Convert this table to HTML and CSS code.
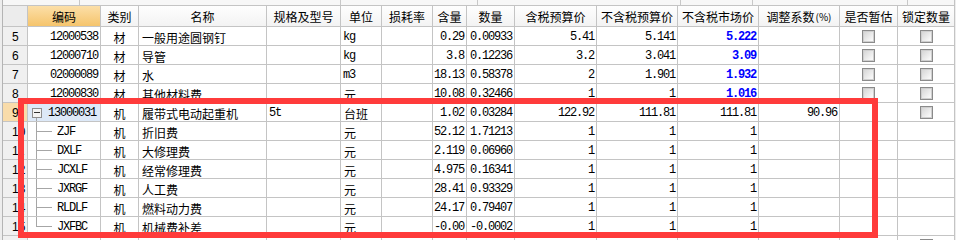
FILE: index.html
```html
<!DOCTYPE html>
<html>
<head>
<meta charset="utf-8">
<link rel="stylesheet" href="styles.css">
</head>
<body>
<div class="wrap">
  <div class="strip">
    <div class="s"></div><div class="s"></div><div class="s"></div><div class="s"></div><div class="s"></div><div class="s"></div><div class="s last"></div>
  </div>
  <div class="row head">
    <div class="c h rnh"></div>
    <div class="c h sel">编码</div>
    <div class="c h">类别</div>
    <div class="c h">名称</div>
    <div class="c h">规格及型号</div>
    <div class="c h">单位</div>
    <div class="c h">损耗率</div>
    <div class="c h">含量</div>
    <div class="c h">数量</div>
    <div class="c h">含税预算价</div>
    <div class="c h">不含税预算价</div>
    <div class="c h">不含税市场价</div>
    <div class="c h">调整系数<span class="pct">(%)</span></div>
    <div class="c h">是否暂估</div>
    <div class="c h">锁定数量</div>
  </div>

  <div class="row">
    <div class="c rn">5</div><div class="c n r">12000538</div><div class="c z ctr">材</div><div class="c z">一般用途圆钢钉</div><div class="c n"></div><div class="c n">kg</div><div class="c"></div><div class="c n r">0.29</div><div class="c n r">0.00933</div><div class="c n r">5.41</div><div class="c n r">5.141</div><div class="c n r blue">5.222</div><div class="c"></div><div class="c ctr"><span class="cb"></span></div><div class="c ctr"><span class="cb"></span></div>
  </div>
  <div class="row">
    <div class="c rn">6</div><div class="c n r">12000710</div><div class="c z ctr">材</div><div class="c z">导管</div><div class="c n"></div><div class="c n">kg</div><div class="c"></div><div class="c n r">3.8</div><div class="c n r">0.12236</div><div class="c n r">3.2</div><div class="c n r">3.041</div><div class="c n r blue">3.09</div><div class="c"></div><div class="c ctr"><span class="cb"></span></div><div class="c ctr"><span class="cb"></span></div>
  </div>
  <div class="row">
    <div class="c rn">7</div><div class="c n r">02000089</div><div class="c z ctr">材</div><div class="c z">水</div><div class="c n"></div><div class="c n">m3</div><div class="c"></div><div class="c n r">18.13</div><div class="c n r">0.58378</div><div class="c n r">2</div><div class="c n r">1.901</div><div class="c n r blue">1.932</div><div class="c"></div><div class="c ctr"><span class="cb"></span></div><div class="c ctr"><span class="cb"></span></div>
  </div>
  <div class="row">
    <div class="c rn">8</div><div class="c n r">12000830</div><div class="c z ctr">材</div><div class="c z">其他材料费</div><div class="c n"></div><div class="c z">元</div><div class="c"></div><div class="c n r">10.08</div><div class="c n r">0.32466</div><div class="c n r">1</div><div class="c n r">1</div><div class="c n r blue">1.016</div><div class="c"></div><div class="c ctr"><span class="cb"></span></div><div class="c ctr"><span class="cb"></span></div>
  </div>
  <div class="row">
    <div class="c rn rnsel">9</div><div class="c n parent cursel"><span class="tbox minus"></span>13000031</div><div class="c z ctr">机</div><div class="c z">履带式电动起重机</div><div class="c n">5t</div><div class="c z">台班</div><div class="c"></div><div class="c n r">1.02</div><div class="c n r">0.03284</div><div class="c n r">122.92</div><div class="c n r">111.81</div><div class="c n r">111.81</div><div class="c n r">90.96</div><div class="c"></div><div class="c ctr"><span class="cb"></span></div>
  </div>
  <div class="row">
    <div class="c rn">10</div><div class="c n child">ZJF</div><div class="c z ctr">机</div><div class="c z">折旧费</div><div class="c n"></div><div class="c z">元</div><div class="c"></div><div class="c n r">52.12</div><div class="c n r">1.71213</div><div class="c n r">1</div><div class="c n r">1</div><div class="c n r">1</div><div class="c"></div><div class="c"></div><div class="c"></div>
  </div>
  <div class="row">
    <div class="c rn">11</div><div class="c n child">DXLF</div><div class="c z ctr">机</div><div class="c z">大修理费</div><div class="c n"></div><div class="c z">元</div><div class="c"></div><div class="c n r">2.119</div><div class="c n r">0.06960</div><div class="c n r">1</div><div class="c n r">1</div><div class="c n r">1</div><div class="c"></div><div class="c"></div><div class="c"></div>
  </div>
  <div class="row">
    <div class="c rn">12</div><div class="c n child">JCXLF</div><div class="c z ctr">机</div><div class="c z">经常修理费</div><div class="c n"></div><div class="c z">元</div><div class="c"></div><div class="c n r">4.975</div><div class="c n r">0.16341</div><div class="c n r">1</div><div class="c n r">1</div><div class="c n r">1</div><div class="c"></div><div class="c"></div><div class="c"></div>
  </div>
  <div class="row">
    <div class="c rn">13</div><div class="c n child">JXRGF</div><div class="c z ctr">机</div><div class="c z">人工费</div><div class="c n"></div><div class="c z">元</div><div class="c"></div><div class="c n r">28.41</div><div class="c n r">0.93329</div><div class="c n r">1</div><div class="c n r">1</div><div class="c n r">1</div><div class="c"></div><div class="c"></div><div class="c"></div>
  </div>
  <div class="row">
    <div class="c rn">14</div><div class="c n child">RLDLF</div><div class="c z ctr">机</div><div class="c z">燃料动力费</div><div class="c n"></div><div class="c z">元</div><div class="c"></div><div class="c n r">24.17</div><div class="c n r">0.79407</div><div class="c n r">1</div><div class="c n r">1</div><div class="c n r">1</div><div class="c"></div><div class="c"></div><div class="c"></div>
  </div>
  <div class="row">
    <div class="c rn">15</div><div class="c n child lastchild">JXFBC</div><div class="c z ctr">机</div><div class="c z">机械费补差</div><div class="c n"></div><div class="c z">元</div><div class="c"></div><div class="c n r">-0.00</div><div class="c n r">-0.0002</div><div class="c n r">1</div><div class="c n r">1</div><div class="c n r">1</div><div class="c"></div><div class="c"></div><div class="c"></div>
  </div>
  <div class="row">
    <div class="c rn">16</div><div class="c n parent"><span class="tbox plus"></span>13000058</div><div class="c z ctr">机</div><div class="c z">汽车式起重机械台班费</div><div class="c n"></div><div class="c z">台班</div><div class="c"></div><div class="c n r">0.35</div><div class="c n r">0.01127</div><div class="c n r">98.50</div><div class="c n r">90.12</div><div class="c n r">90.12</div><div class="c"></div><div class="c"></div><div class="c ctr"><span class="cb"></span></div>
  </div>
</div>
<div class="redbox"></div>
</body>
</html>
```
FILE: styles.css
```css
html, body {
  margin: 0;
  padding: 0;
}
body {
  width: 956px;
  height: 240px;
  overflow: hidden;
  position: relative;
  background: #ededed;
}
.wrap {
  margin-left: 2px;
  width: 951px;
  border-left: 1px solid #b4b4b4;
  border-right: 1px solid #c4c4c4;
  background: #ffffff;
  height: 240px;
  overflow: hidden;
}
.strip {
  height: 5px;
  border-bottom: 1px solid #c4c4c4;
  background: #f7f7f7;
  display: grid;
  grid-template-columns: 77px 261px 137px 203px 72px 155px 1fr;
}
.s {
  border-right: 1px solid #c8c8c8;
}
.s.last {
  border-right: none;
}
.row {
  display: grid;
  grid-template-columns: 25px 73px 38px 128px 74px 41px 51px 34px 48px 82px 81px 81px 81px 58px 56px;
  height: 19px;
}
.row.head {
  height: 21px;
}
.c {
  box-sizing: border-box;
  border-right: 1px solid #c4c4c4;
  border-bottom: 1px solid #c4c4c4;
  overflow: hidden;
  white-space: nowrap;
  display: flex;
  align-items: center;
  min-width: 0;
  color: #000;
}
.row .c:last-child {
  border-right: none;
}
.h {
  justify-content: center;
  font-family: "Noto Sans CJK SC", sans-serif;
  font-size: 12px;
  background: linear-gradient(#fefefe, #f3f3f3);
  padding-top: 1px;
}
.h.rnh {
  background: #ececec;
}
.h.sel {
  background: linear-gradient(#fcdfa8, #f5c46c);
}
.pct {
  font-size: 10px;
  margin-left: 1px;
}
.rn {
  background: #f0f0f0;
  font-family: "Liberation Sans", sans-serif;
  font-size: 12px;
  padding-left: 9px;
  padding-top: 1px;
}
.rn.rnsel {
  background: #f9dcaa;
}
.z {
  font-family: "Noto Sans CJK SC", sans-serif;
  font-size: 12px;
  padding-left: 3px;
  padding-top: 2px;
}
.z.ctr {
  justify-content: center;
  padding-left: 0;
}
.ctr {
  justify-content: center;
}
.n {
  font-family: "Liberation Mono", monospace;
  font-size: 12px;
  letter-spacing: -1.2px;
  padding-left: 2px;
  padding-top: 1px;
}
.n.r {
  justify-content: flex-end;
  padding-right: 2px;
  padding-left: 0;
}
.blue {
  color: #0000ff;
  font-weight: bold;
}
.cursel {
  background-color: #dde9f8;
}
.parent {
  padding-left: 4px;
}
.cursel.parent {
  background-image: linear-gradient(#a6a6a6, #a6a6a6);
  background-repeat: no-repeat;
  background-position: 8px 100%;
  background-size: 1px 4px;
}
.tbox {
  box-sizing: border-box;
  width: 10px;
  height: 10px;
  border: 1px solid #8e8e8e;
  margin-right: 6px;
  flex: none;
  background-color: #f4f4f4;
  background-image: linear-gradient(#333, #333);
  background-repeat: no-repeat;
  background-position: center;
  background-size: 6px 1px;
}
.tbox.plus {
  background-image: linear-gradient(#333, #333), linear-gradient(#333, #333);
  background-size: 6px 1px, 1px 6px;
}
.child {
  padding-left: 29px;
  background-image: linear-gradient(#a6a6a6, #a6a6a6), linear-gradient(#a6a6a6, #a6a6a6);
  background-repeat: no-repeat;
  background-position: 8px 0, 8px 9px;
  background-size: 1px 100%, 16px 1px;
}
.child.lastchild {
  background-size: 1px 10px, 16px 1px;
}
.cb {
  box-sizing: border-box;
  width: 13px;
  height: 13px;
  border: 1px solid #8a8a8a;
  box-shadow: inset 0 0 0 1px #cfcfcf;
  background: linear-gradient(135deg, #d2d2d2, #f7f7f7 80%);
}
.redbox {
  position: absolute;
  left: 18px;
  top: 98px;
  width: 860px;
  height: 140px;
  box-sizing: border-box;
  border: 6px solid #ff3b3b;
}
```
